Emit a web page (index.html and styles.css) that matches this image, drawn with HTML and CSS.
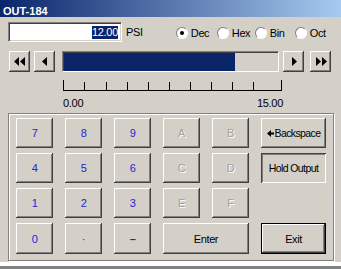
FILE: index.html
```html
<!DOCTYPE html>
<html lang="en">
<head>
    <meta charset="UTF-8">
    <title>OUT-184</title>
    <link rel="stylesheet" href="styles.css">
</head>
<body>

<div class="window">
    <div class="titlebar">OUT-184</div>

    <div class="content">
        <!-- value entry and number base -->
        <div class="top-row">
            <div class="value-box"><span class="selected">12.00</span></div>
            <span class="unit">PSI</span>
            <div class="bases">
                <label class="base"><span class="radio checked"></span>Dec</label>
                <label class="base"><span class="radio"></span>Hex</label>
                <label class="base"><span class="radio"></span>Bin</label>
                <label class="base"><span class="radio"></span>Oct</label>
            </div>
        </div>

        <!-- slider -->
        <div class="slider-row">
            <button class="step first">
                <svg width="12" height="9" viewBox="0 0 12 9"><polygon points="5,0 5,9 0,4.5" /><polygon points="11,0 11,9 6,4.5" /></svg>
            </button>
            <button class="step second">
                <svg width="6" height="9" viewBox="0 0 6 9"><polygon points="5,0 5,9 0,4.5" /></svg>
            </button>
            <div class="track"><div class="fill" style="width: 80%"></div></div>
            <button class="step third">
                <svg width="6" height="9" viewBox="0 0 6 9"><polygon points="1,0 1,9 6,4.5" /></svg>
            </button>
            <button class="step fourth">
                <svg width="12" height="9" viewBox="0 0 12 9"><polygon points="1,0 1,9 6,4.5" /><polygon points="7,0 7,9 12,4.5" /></svg>
            </button>
        </div>

        <div class="scale">
            <svg width="222" height="11" viewBox="0 0 222 11">
                <g stroke="#000" stroke-width="1">
                    <line x1="1" y1="10.5" x2="220" y2="10.5" />
                    <line x1="1.5" y1="0" x2="1.5" y2="11" />
                    <line x1="22.5" y1="2" x2="22.5" y2="10" />
                    <line x1="44.5" y1="2" x2="44.5" y2="10" />
                    <line x1="65.5" y1="2" x2="65.5" y2="10" />
                    <line x1="86.5" y1="2" x2="86.5" y2="10" />
                    <line x1="107.5" y1="2" x2="107.5" y2="10" />
                    <line x1="128.5" y1="2" x2="128.5" y2="10" />
                    <line x1="149.5" y1="2" x2="149.5" y2="10" />
                    <line x1="170.5" y1="2" x2="170.5" y2="10" />
                    <line x1="191.5" y1="2" x2="191.5" y2="10" />
                    <line x1="219.5" y1="0" x2="219.5" y2="11" />
                </g>
            </svg>
            <div class="scale-labels">
                <span>0.00</span>
                <span>15.00</span>
            </div>
        </div>

        <!-- keypad -->
        <div class="keypad">
            <button class="key digit">7</button>
            <button class="key digit">8</button>
            <button class="key digit">9</button>
            <button class="key off">A</button>
            <button class="key off">B</button>
            <button class="key label"><svg class="back-arrow" width="7" height="7" viewBox="0 0 7 7"><polygon points="0,3.5 4,0 4,7" /><rect x="4" y="2.5" width="3" height="2" /></svg>Backspace</button>

            <button class="key digit">4</button>
            <button class="key digit">5</button>
            <button class="key digit">6</button>
            <button class="key off">C</button>
            <button class="key off">D</button>
            <button class="key label pressed">Hold Output</button>

            <button class="key digit">1</button>
            <button class="key digit">2</button>
            <button class="key digit">3</button>
            <button class="key off">E</button>
            <button class="key off">F</button>
            <span></span>

            <button class="key digit">0</button>
            <button class="key digit">&middot;</button>
            <button class="key digit minus">&ndash;</button>
            <button class="key wide">Enter</button>
            <button class="key default">Exit</button>
        </div>
    </div>
</div>

</body>
</html>
```

FILE: styles.css
```css
body {
    margin: 0;
    font-family: "Liberation Sans", Arial, sans-serif;
    font-size: 10px;
    color: #000;
}

.window {
    width: 341px;
    height: 269px;
    box-sizing: border-box;
    background: #d4d0c8;
    border-bottom: 3px solid #808080;
    box-shadow: inset 0 -4px 0 #fff;
    overflow: hidden;
}

.titlebar {
    height: 17px;
    box-sizing: border-box;
    padding: 6px 0 0 3px;
    background: linear-gradient(to right, #0a246a, #a6caf0);
    color: #fff;
    font-size: 11px;
    font-weight: bold;
    line-height: 10px;
}

.content {
    padding: 5px 0 0 8px;
}

/* top row */
.top-row {
    display: flex;
    align-items: center;
    height: 20px;
}

.value-box {
    width: 114px;
    height: 20px;
    box-sizing: border-box;
    background: #fff;
    border-top: 1px solid #808080;
    border-left: 1px solid #808080;
    border-right: 1px solid #fff;
    border-bottom: 1px solid #fff;
    box-shadow: inset 1px 1px 0 #404040, inset -1px -1px 0 #d4d0c8;
    display: flex;
    align-items: center;
    justify-content: flex-end;
    padding-right: 3px;
    font-size: 11px;
}

.selected {
    background: #0a246a;
    color: #fff;
    line-height: 13px;
    letter-spacing: -0.3px;
}

.unit {
    margin-left: 4px;
    font-size: 11px;
    letter-spacing: -0.3px;
}

.bases {
    display: grid;
    grid-template-columns: 41px 38px 40px auto;
    margin-left: 33px;
    margin-top: 2px;
}

.base {
    display: flex;
    align-items: center;
    gap: 3px;
    font-size: 11px;
    letter-spacing: -0.4px;
}

.radio {
    width: 12px;
    height: 12px;
    box-sizing: border-box;
    border-radius: 50%;
    background: #fff;
    border: 1px solid;
    border-color: #808080 #fff #fff #808080;
    display: flex;
    align-items: center;
    justify-content: center;
}

.radio.checked::after {
    content: "";
    width: 4px;
    height: 4px;
    border-radius: 50%;
    background: #000;
}

/* slider row */
.slider-row {
    display: flex;
    align-items: center;
    margin-top: 9px;
    margin-left: 1px;
    height: 21px;
}

button {
    font-family: inherit;
    background: #d4d0c8;
    border: none;
    padding: 0;
    box-shadow: inset -1px -1px 0 #404040, inset 1px 1px 0 #fff, inset -2px -2px 0 #808080;
}

.step {
    width: 21px;
    height: 21px;
    display: flex;
    align-items: center;
    justify-content: center;
}

.step svg {
    fill: #000;
}

.second {
    margin-left: 4px;
}

.track {
    width: 217px;
    height: 21px;
    box-sizing: border-box;
    margin-left: 7px;
    border-top: 1px solid #808080;
    border-left: 1px solid #808080;
    border-right: 1px solid #fff;
    border-bottom: 1px solid #fff;
    box-shadow: inset 1px 1px 0 #404040;
    padding: 1px 0 0 1px;
    background: #d4d0c8;
}

.fill {
    height: 100%;
    background: #0a246a;
}

.third {
    margin-left: 4px;
}

.fourth {
    margin-left: 6px;
}

/* scale */
.scale {
    margin-left: 54px;
    margin-top: 8px;
    width: 222px;
}

.scale svg {
    display: block;
}

.scale-labels {
    display: flex;
    justify-content: space-between;
    margin-top: 6px;
    padding: 0 1px 0 1px;
    font-size: 11px;
    line-height: 12px;
    letter-spacing: -0.3px;
}

/* keypad */
.keypad {
    width: 326px;
    height: 148px;
    box-sizing: border-box;
    margin-top: 4px;
    border: 1px solid #808080;
    box-shadow: inset 1px 1px 0 #fff, 1px 1px 0 #fff;
    padding: 4px 0 0 7px;
    display: grid;
    grid-template-columns: 37px 37px 37px 37px 37px 65px;
    grid-template-rows: 30px 30px 30px 31px;
    column-gap: 12px;
    row-gap: 5px;
}

.key {
    font-size: 11px;
    letter-spacing: -0.4px;
    color: #000;
}

.label {
    font-size: 10.5px;
    letter-spacing: -0.6px;
    display: flex;
    align-items: center;
    justify-content: center;
}

.back-arrow {
    margin-right: 1px;
    fill: #000;
}

.digit {
    color: #2323d8;
}

.minus {
    font-weight: bold;
}

.off {
    color: #a0a0a0;
    text-shadow: 1px 1px 0 #fff;
}

.wide {
    grid-column: span 2;
}

.pressed {
    box-shadow: inset 1px 1px 0 #404040, inset -1px -1px 0 #fff, inset 2px 2px 0 #808080;
}

.default {
    box-shadow: inset 0 0 0 1px #000, inset -2px -2px 0 #404040, inset 2px 2px 0 #fff, inset -3px -3px 0 #808080;
}
```
